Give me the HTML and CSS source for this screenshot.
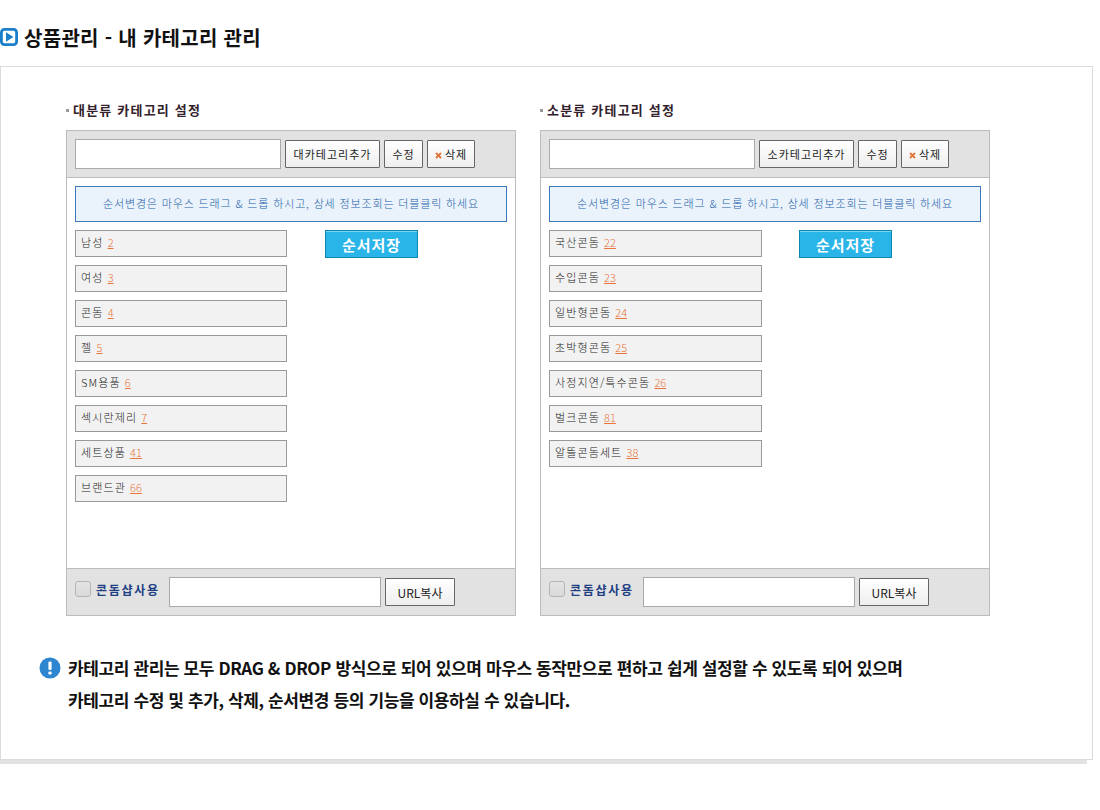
FILE: index.html
```html
<!DOCTYPE html>
<html lang="ko">
<head>
<meta charset="utf-8">
<title>상품관리 - 내 카테고리 관리</title>
<link rel="stylesheet" href="styles.css">
</head>
<body>
<h1 class="page-title">
  <svg class="title-icon" width="18" height="18" viewBox="0 0 18 18"><rect x="1.4" y="1.4" width="15.2" height="15.2" rx="3" fill="#fff" stroke="#1a7fc8" stroke-width="2.8"/><path d="M6 4.2v9.6l7.4-4.8z" fill="#1a7fc8"/></svg>
  <span>상품관리 - 내 카테고리 관리</span>
</h1>
<div class="frame">
  <div class="panels">
    <section class="group">
      <h2 class="group-title"><i class="square"></i>대분류 카테고리 설정</h2>
      <div class="panel">
        <div class="toolbar">
          <input class="text-input toolbar-input" type="text">
          <button class="btn btn-add">대카테고리추가</button>
          <button class="btn btn-edit">수정</button>
          <button class="btn btn-del"><svg class="x" width="7" height="7" viewBox="0 0 7 7"><path d="M1 1l5 5M6 1L1 6" stroke="#e2743a" stroke-width="1.8"/></svg>삭제</button>
        </div>
        <div class="panel-body">
          <p class="hint">순서변경은 마우스 드래그 &amp; 드롭 하시고, 상세 정보조회는 더블클릭 하세요</p>
          <div class="list-row">
            <ul class="cat-list">
              <li>남성 <a>2</a></li>
              <li>여성 <a>3</a></li>
              <li>콘돔 <a>4</a></li>
              <li>젤 <a>5</a></li>
              <li>SM용품 <a>6</a></li>
              <li>섹시란제리 <a>7</a></li>
              <li>세트상품 <a>41</a></li>
              <li>브랜드관 <a>66</a></li>
            </ul>
            <button class="save">순서저장</button>
          </div>
        </div>
        <div class="footer">
          <span class="check"></span>
          <b class="shop-label">콘돔샵사용</b>
          <input class="text-input url-input" type="text">
          <button class="btn btn-url">URL복사</button>
        </div>
      </div>
    </section>
    <section class="group">
      <h2 class="group-title"><i class="square"></i>소분류 카테고리 설정</h2>
      <div class="panel">
        <div class="toolbar">
          <input class="text-input toolbar-input" type="text">
          <button class="btn btn-add">소카테고리추가</button>
          <button class="btn btn-edit">수정</button>
          <button class="btn btn-del"><svg class="x" width="7" height="7" viewBox="0 0 7 7"><path d="M1 1l5 5M6 1L1 6" stroke="#e2743a" stroke-width="1.8"/></svg>삭제</button>
        </div>
        <div class="panel-body">
          <p class="hint">순서변경은 마우스 드래그 &amp; 드롭 하시고, 상세 정보조회는 더블클릭 하세요</p>
          <div class="list-row">
            <ul class="cat-list cat-list-wide">
              <li>국산콘돔 <a>22</a></li>
              <li>수입콘돔 <a>23</a></li>
              <li>일반형콘돔 <a>24</a></li>
              <li>초박형콘돔 <a>25</a></li>
              <li>사정지연/특수콘돔 <a>26</a></li>
              <li>벌크콘돔 <a>81</a></li>
              <li>알뜰콘돔세트 <a>38</a></li>
            </ul>
            <button class="save">순서저장</button>
          </div>
        </div>
        <div class="footer">
          <span class="check"></span>
          <b class="shop-label">콘돔샵사용</b>
          <input class="text-input url-input" type="text">
          <button class="btn btn-url">URL복사</button>
        </div>
      </div>
    </section>
  </div>
  <div class="notice">
    <svg class="notice-icon" width="22" height="22" viewBox="0 0 22 22"><circle cx="11" cy="11" r="10.5" fill="#2f86d0"/><rect x="9.4" y="4.4" width="3.2" height="8.6" rx="1.2" fill="#fff"/><rect x="9.4" y="14.4" width="3.2" height="3.2" rx="1.2" fill="#fff"/></svg>
    <p class="notice-text">카테고리 관리는 모두 DRAG &amp; DROP 방식으로 되어 있으며 마우스 동작만으로 편하고 쉽게 설정할 수 있도록 되어 있으며<br>카테고리 수정 및 추가, 삭제, 순서변경 등의 기능을 이용하실 수 있습니다.</p>
  </div>
</div>
</body>
</html>
```
FILE: styles.css
```css
* { box-sizing: border-box; }
html, body { margin: 0; padding: 0; background: #fff; }
body { width: 1100px; height: 810px; overflow: hidden; font-family: "Noto Sans CJK KR", "Noto Sans", sans-serif; color: #333; }
.page-title { display: flex; align-items: center; gap: 6px; height: 66px; margin: 0; padding-top: 8px; font-size: 20px; font-weight: 700; color: #111; letter-spacing: 0.3px; }
.title-icon { flex: none; }
.frame { position: relative; width: 1093px; height: 694px; padding: 32px 0 0 65px; background: #fff; border: 1px solid #dcdcdc; }
.frame::after { content: ""; position: absolute; left: -1px; bottom: -5px; width: 1087px; height: 4px; background: #e2e2e2; }
.panels { display: flex; gap: 24px; }
.group { width: 450px; }
.group-title { display: flex; align-items: center; height: 31px; margin: 0; padding-bottom: 10px; font-size: 13px; font-weight: 700; color: #33222c; letter-spacing: 1.2px; }
.square { width: 3px; height: 3px; margin-right: 4px; margin-top: 2px; background: #999; }
.panel { display: flex; flex-direction: column; height: 486px; border: 1px solid #bcbcbc; }
.toolbar { display: flex; align-items: center; height: 47px; padding-left: 8px; background: #e2e2e2; border-bottom: 1px solid #bcbcbc; }
.text-input { background: #fff; border: 1px solid #aaa; padding: 0; margin: 0; }
.toolbar-input { width: 206px; height: 30px; margin-right: 4px; }
.btn { height: 28px; padding: 0; margin: 0 4px 0 0; font-family: inherit; font-size: 11px; color: #222; letter-spacing: 1px; background: linear-gradient(#fff, #eee); border: 1px solid #666; border-radius: 1px; }
.btn-add { width: 95px; }
.btn-edit { width: 39px; }
.btn-del { width: 48px; }
.x { margin-right: 3px; }
.panel-body { flex: 1; padding: 8px 8px 0; background: #fff; }
.hint { display: flex; align-items: center; justify-content: center; height: 36px; margin: 0; padding-bottom: 2px; font-size: 11px; font-weight: 300; color: #245fa8; letter-spacing: 0.85px; background: #eaf2fb; border: 1px solid #3d78bb; }
.list-row { display: flex; align-items: flex-start; margin-top: 8px; }
.cat-list { display: flex; flex-direction: column; gap: 8px; width: 212px; margin: 0 38px 0 0; padding: 0; list-style: none; }
.cat-list-wide { width: 213px; margin-right: 37px; }
.cat-list li { display: block; height: 27px; padding-left: 5px; font-size: 11px; line-height: 23px; font-weight: 300; color: #222; letter-spacing: 1.1px; background: #f2f2f2; border: 1px solid #999; }
.cat-list a { color: #e8743a; text-decoration: underline; letter-spacing: 0; }
.save { width: 93px; height: 28px; padding: 0; font-family: inherit; font-size: 15px; font-weight: 700; color: #fff; letter-spacing: 1px; background: #29b5e8; border: 1px solid #0e86b4; box-shadow: inset 0 1px 0 #7fd3f2; }
.footer { display: flex; align-items: center; height: 47px; padding-left: 8px; background: #e2e2e2; border-top: 1px solid #bcbcbc; }
.check { flex: none; width: 16px; height: 16px; margin-bottom: 6px; background: linear-gradient(#e4e4e4, #d8d8d8); border: 1px solid #b4b4b4; border-radius: 3px; }
.shop-label { width: 73px; margin-left: 5px; margin-bottom: 6px; font-size: 12px; color: #1f3f84; letter-spacing: 1.7px; white-space: nowrap; }
.url-input { width: 212px; height: 30px; margin-right: 4px; }
.btn-url { width: 70px; font-size: 12px; letter-spacing: 0; }
.notice { display: flex; align-items: flex-start; gap: 7px; margin: 40px 0 0 -27px; }
.notice-icon { flex: none; margin-top: 1px; }
.notice-text { margin: 0; position: relative; top: -4px; font-size: 17px; font-weight: 700; line-height: 32px; color: #111; letter-spacing: -0.38px; white-space: nowrap; }
```
